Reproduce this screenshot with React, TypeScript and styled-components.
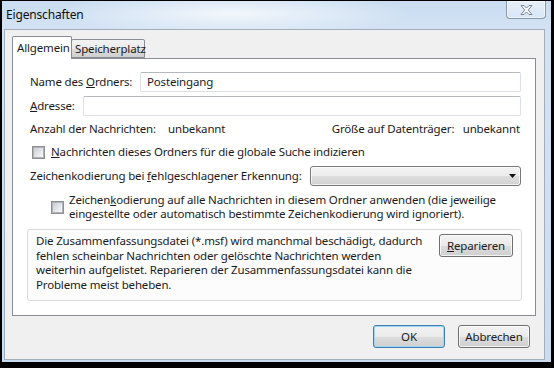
import React from "react";
import styled, { createGlobalStyle } from "styled-components";

const FONT = `"Noto Sans", "Open Sans", sans-serif`;

const Global = createGlobalStyle`
  html, body { margin: 0; padding: 0; background: #000; }
  body { width: 554px; height: 368px; overflow: hidden; }
  #root { width: 554px; height: 368px; }
  * { box-sizing: border-box; }
`;

const Screen = styled.div`
  width: 554px;
  height: 368px;
  background: #000;
  padding: 1px 3px 6px 2px;
  display: flex;
  font-family: ${FONT};
  font-size: 11.5px;
  letter-spacing: -0.16px;
  color: #1b1b1b;
`;

const Frame = styled.div`
  flex: 1;
  display: flex;
  flex-direction: column;
  padding: 0 6px 2px 2px;
  background:
    radial-gradient(ellipse 180px 22px at 230px 12px, rgba(255,255,255,0.75), rgba(255,255,255,0) 100%),
    linear-gradient(180deg, #c9dcf1 0px, #d3e3f4 28px, #cadcf0 100%);
`;

const TitleBar = styled.div`
  height: 28px;
  display: flex;
  align-items: flex-start;
  padding-left: 2px;
`;

const Title = styled.div`
  margin-top: 6px;
  font-size: 12px;
  color: #101010;
  line-height: 16px;
`;

const CloseBtn = styled.div`
  margin-left: auto;
  margin-right: -1px;
  width: 40px;
  height: 18px;
  border: 1px solid #8a98a9;
  border-top: none;
  border-radius: 0 0 4px 4px;
  background: linear-gradient(180deg, rgba(255,255,255,0.55), rgba(230,238,248,0.4));
  box-shadow: inset 0 0 0 1px rgba(255,255,255,0.6);
  display: flex;
  align-items: center;
  justify-content: center;
  padding-top: 1px;
`;

const Client = styled.div`
  flex: 1;
  display: flex;
  flex-direction: column;
  background: #f0f0f0;
  border: 1px solid #a3aebb;
  padding: 6px 8px 0 7px;
`;

const TabStrip = styled.div`
  display: flex;
  align-items: flex-end;
  height: 22px;
  position: relative;
  z-index: 1;
`;

const Tab = styled.div<{ $active?: boolean }>`
  border: 1px solid #898c95;
  border-bottom: ${(p) => (p.$active ? "none" : "1px solid #898c95")};
  background: ${(p) =>
    p.$active ? "#fff" : "linear-gradient(180deg, #f2f2f2 0%, #ebebeb 50%, #dddddd 51%, #cfcfcf 100%)"};
  height: ${(p) => (p.$active ? "23px" : "19px")};
  margin-bottom: ${(p) => (p.$active ? "-1px" : "0")};
  margin-left: ${(p) => (p.$active ? "0" : "-1px")};
  width: ${(p) => (p.$active ? "60px" : "74px")};
  padding-left: ${(p) => (p.$active ? "4px" : "3px")};
  padding-top: ${(p) => (p.$active ? "3px" : "1px")};
  line-height: 16px;
  white-space: nowrap;
  border-radius: 2px 2px 0 0;
`;

const Panel = styled.div`
  width: 524px;
  height: 258px;
  background: #fff;
  border: 1px solid #898c95;
  padding: 13px 13px 0 14px;
  display: flex;
  flex-direction: column;
`;

const Row = styled.div<{ $mt?: number; $h?: number }>`
  display: flex;
  align-items: center;
  margin-top: ${(p) => p.$mt ?? 0}px;
  height: ${(p) => p.$h ?? 20}px;
  line-height: 16px;
  white-space: nowrap;
`;

const Label = styled.span<{ $w?: number; $pl?: number }>`
  flex: none;
  width: ${(p) => (p.$w ? `${p.$w}px` : "auto")};
  padding-left: ${(p) => p.$pl ?? 3}px;
`;

const TextInput = styled.div`
  flex: 1;
  height: 20px;
  margin-right: 1px;
  border: 1px solid #dcdfe3;
  border-top-color: #b5b8be;
  border-radius: 2px;
  background: #fff;
  padding: 1px 0 0 6px;
  line-height: 16px;
`;

const Spacer = styled.div`
  flex: 1;
`;

const Box = styled.span<{ $ml?: number }>`
  flex: none;
  width: 13px;
  height: 13px;
  margin-left: ${(p) => p.$ml ?? 0}px;
  border: 1px solid #8e8f8f;
  background: #f6f6f6;
  display: flex;
  align-items: center;
  justify-content: center;
  &::after {
    content: "";
    width: 9px;
    height: 9px;
    border: 1px solid #b0b4ba;
    background: linear-gradient(135deg, #c9cdd3 0%, #e4e6e9 55%, #f8f8f8 100%);
  }
`;

const CheckText = styled.span<{ $gap?: number }>`
  margin-left: ${(p) => p.$gap ?? 6}px;
  line-height: 14px;
`;

const Select = styled.div`
  width: 211px;
  height: 20px;
  margin-left: auto;
  margin-right: 1px;
  border: 1px solid #7a7a7a;
  border-radius: 3px;
  background: linear-gradient(180deg, #f3f3f3 0%, #ececec 50%, #dedede 51%, #d2d2d2 100%);
  box-shadow: inset 0 0 0 1px rgba(255,255,255,0.7);
  display: flex;
  align-items: center;
  justify-content: flex-end;
  padding-right: 4px;
`;

const Group = styled.div`
  margin-top: 8px;
  width: 495px;
  height: 72px;
  border: 1px solid #dadada;
  border-radius: 3px;
  background: #fcfcfc;
  display: flex;
  align-items: flex-start;
  padding: 4px 8px 0 8px;
`;

const GroupText = styled.p`
  margin: 0;
  flex: 1;
  line-height: 14.5px;
  white-space: nowrap;
`;

const Button = styled.div<{ $default?: boolean; $w?: number }>`
  flex: none;
  width: ${(p) => p.$w ?? 72}px;
  height: 23px;
  border: 1px solid ${(p) => (p.$default ? "#3c7fb1" : "#707070")};
  border-radius: 3px;
  background: linear-gradient(180deg, #f2f2f2 0%, #ebebeb 50%, #dddddd 51%, #cfcfcf 100%);
  box-shadow: inset 0 0 0 1px ${(p) => (p.$default ? "#9fd8f6" : "rgba(255,255,255,0.75)")};
  display: flex;
  align-items: center;
  justify-content: center;
  line-height: 16px;
  color: #1b1b1b;
`;

const ButtonRow = styled.div`
  display: flex;
  justify-content: flex-end;
  gap: 13px;
  margin-top: 9px;
  margin-right: 6px;
`;

const U = styled.span`
  text-decoration: underline;
  text-underline-offset: 1px;
`;

export default function App() {
  return (
    <>
      <Global />
      <Screen>
        <Frame>
          <TitleBar>
            <Title>Eigenschaften</Title>
            <CloseBtn>
              <svg width="13" height="10" viewBox="0 0 13 10">
                <path
                  d="M1 0.5 H4 L6.5 3 L9 0.5 H12 L8.3 5 L12 9.5 H9 L6.5 7 L4 9.5 H1 L4.7 5 Z"
                  fill="#f4f6f9"
                  stroke="#6f7b8a"
                  strokeWidth="0.9"
                  strokeLinejoin="round"
                />
              </svg>
            </CloseBtn>
          </TitleBar>
          <Client>
            <TabStrip>
              <Tab $active>Allgemein</Tab>
              <Tab>Speicherplatz</Tab>
            </TabStrip>
            <Panel>
              <Row>
                <Label $w={113}>
                  Name des <U>O</U>rdners:
                </Label>
                <TextInput>Posteingang</TextInput>
              </Row>
              <Row $mt={4}>
                <Label $w={56}>
                  <U>A</U>dresse:
                </Label>
                <TextInput />
              </Row>
              <Row $mt={5} $h={16}>
                <Label $w={141}>Anzahl der Nachrichten:</Label>
                <span>unbekannt</span>
                <Spacer />
                <Label $w={131} $pl={0}>Größe auf Datenträger:</Label>
                <Label $pl={0}>unbekannt</Label>
                <Label $w={2} $pl={0} />
              </Row>
              <Row $mt={7} $h={16}>
                <Box $ml={5} />
                <CheckText>
                  <U>N</U>achrichten dieses Ordners für die globale Suche indizieren
                </CheckText>
              </Row>
              <Row $mt={6}>
                <Label>
                  Zeichenkodierung bei <U>f</U>ehlgeschlagener Erkennung:
                </Label>
                <Select>
                  <svg width="7" height="4" viewBox="0 0 7 4">
                    <path d="M0 0 H7 L3.5 4 Z" fill="#111" />
                  </svg>
                </Select>
              </Row>
              <Row $mt={7} $h={28}>
                <Box $ml={24} />
                <CheckText $gap={5}>
                  Zeichen<U>k</U>odierung auf alle Nachrichten in diesem Ordner anwenden (die jeweilige
                  <br />
                  eingestellte oder automatisch bestimmte Zeichenkodierung wird ignoriert).
                </CheckText>
              </Row>
              <Group>
                <GroupText>
                  Die Zusammenfassungsdatei (*.msf) wird manchmal beschädigt, dadurch
                  <br />
                  fehlen scheinbar Nachrichten oder gelöschte Nachrichten werden
                  <br />
                  weiterhin aufgelistet. Reparieren der Zusammenfassungsdatei kann die
                  <br />
                  Probleme meist beheben.
                </GroupText>
                <Button $w={74}>
                  <U>R</U>eparieren
                </Button>
              </Group>
            </Panel>
            <ButtonRow>
              <Button $default>OK</Button>
              <Button>Abbrechen</Button>
            </ButtonRow>
          </Client>
        </Frame>
      </Screen>
    </>
  );
}
